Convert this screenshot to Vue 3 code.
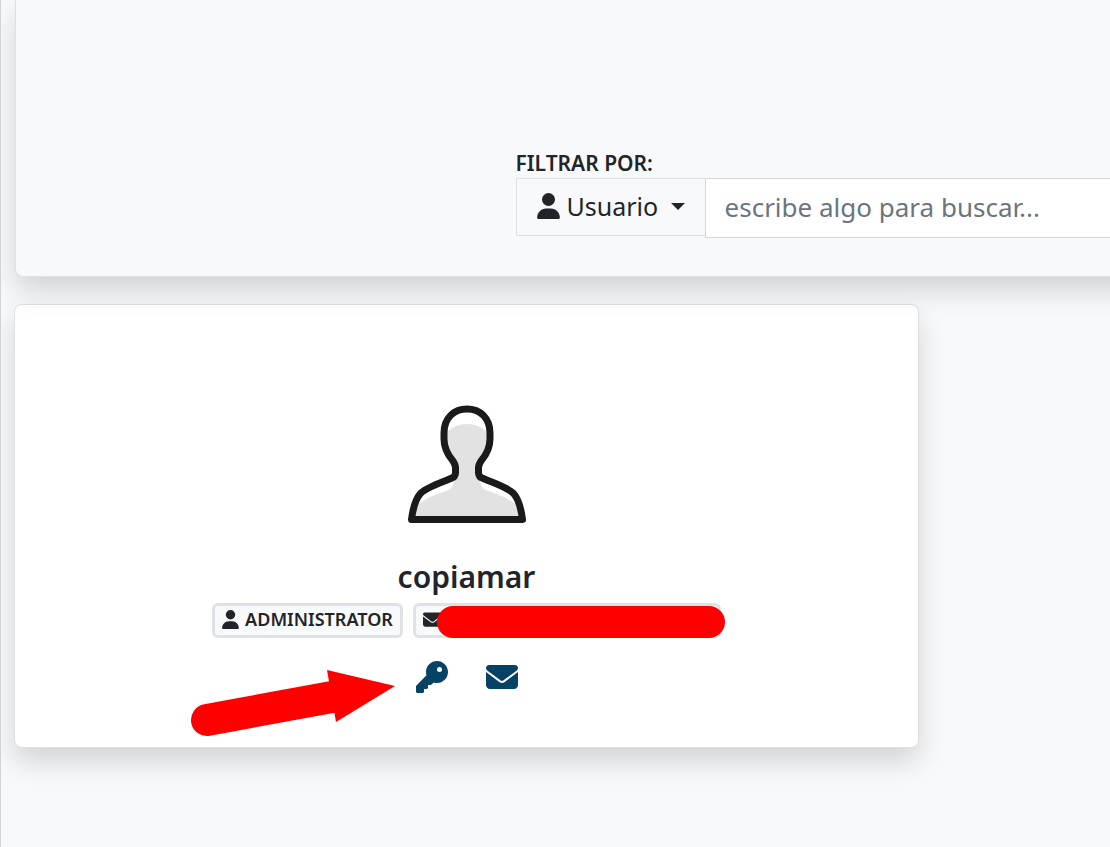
<script setup>
import { ref } from 'vue'

const query = ref('')
const personPath = 'M224 256a128 128 0 1 0 0-256 128 128 0 1 0 0 256zm-45.700 48C79.800 304 0 383.800 0 482.300 0 498.700 13.300 512 29.700 512h388.600c16.400 0 29.700-13.300 29.700-29.700C448 383.800 368.200 304 269.700 304z'
const mailPath = 'M48 64C21.500 64 0 85.500 0 112c0 15.100 7.100 29.300 19.200 38.400l217.600 163.200c11.400 8.500 27 8.500 38.400 0l217.600-163.200C504.900 141.300 512 127.100 512 112c0-26.500-21.500-48-48-48zM0 176v208c0 35.300 28.700 64 64 64h384c35.300 0 64-28.700 64-64V176L294.400 339.200c-22.800 17.100-54 17.100-76.800 0z'
const keyPath = 'M336 352c97.200 0 176-78.800 176-176S433.200 0 336 0 160 78.800 160 176c0 18.700 2.900 36.800 8.300 53.700L7 391c-4.500 4.500-7 10.600-7 17v80c0 13.300 10.700 24 24 24h80c13.300 0 24-10.700 24-24v-40h40c13.300 0 24-10.700 24-24v-40h40c6.400 0 12.500-2.500 17-7l33.300-33.300c16.900 5.400 35 8.300 53.700 8.300zM376 96a40 40 0 1 1 0 80 40 40 0 1 1 0-80z'
</script>

<template>
  <main class="page">
    <section class="panel">
      <div class="filter">
        <label class="filter-label" for="search">FILTRAR POR:</label>
        <div class="input-group">
          <button class="dropdown" type="button" aria-haspopup="true">
            <svg class="person" viewBox="0 0 448 512" aria-hidden="true"><path :d="personPath" /></svg>
            <span>Usuario</span>
            <span class="caret"></span>
          </button>
          <input id="search" v-model="query" class="search" type="text" placeholder="escribe algo para buscar..." />
        </div>
      </div>
    </section>

    <article class="card">
      <svg class="avatar" viewBox="0 0 120 120" role="img" aria-label="Avatar">
        <path class="fill" d="M5 115 7 106Q9 101 16 97C25 91 36 89 43 85Q47 83 48 70L43 54Q37 45 37 33C41 25 50 20 60 20S79 25 83 33Q83 45 77 54L72 70Q73 83 77 85C84 89 95 91 104 97Q111 101 113 106L115 115Z" />
        <path class="line" d="M4.500 115.500C6 104 8 96 13 90C19 83 36 78 45 74Q48 73 48.500 69V63Q48 60 46 57C40 50 37 43 37 35V29C37 14 47 5 60 5S83 14 83 29V35C83 43 80 50 74 57Q72 60 71.500 63V69Q72 73 75 74C84 78 101 83 107 90C112 96 114 104 115.500 115.500Z" />
      </svg>
      <h1 class="name">copiamar</h1>
      <div class="badges">
        <span class="badge">
          <svg class="small-person" viewBox="0 0 448 512" aria-hidden="true"><path :d="personPath" /></svg>
          ADMINISTRATOR
        </span>
        <span class="badge email">
          <svg class="small-mail" viewBox="0 0 512 512" aria-hidden="true"><path :d="mailPath" /></svg>
          <span class="redaction"></span>
        </span>
      </div>
      <div class="actions">
        <button type="button" aria-label="Cambiar clave">
          <svg viewBox="0 0 512 512" aria-hidden="true"><path :d="keyPath" /></svg>
        </button>
        <button type="button" aria-label="Enviar correo">
          <svg viewBox="0 0 512 512" aria-hidden="true"><path :d="mailPath" /></svg>
        </button>
        <svg class="arrow" viewBox="0 0 206 68" aria-hidden="true">
          <path class="shaft" d="M17 51 142 28" />
          <path d="M137 1 205 17 146 53Z" />
        </svg>
      </div>
    </article>
  </main>
</template>

<style>
body {
  margin: 0;
  background: #f8f9fb;
}
</style>

<style scoped>
* {
  box-sizing: border-box;
}
.page {
  min-height: 100vh;
  padding-left: 14px;
  border-left: 1px solid #d3d4d8;
  overflow: hidden;
  background: #f8f9fb;
  color: #212529;
  font-family: "Noto Sans", "Open Sans", sans-serif;
}
.panel {
  position: relative;
  z-index: 1;
  display: grid;
  grid-template-columns: 500fr 595fr;
  margin-right: -40px;
  padding: 148px 40px 38px 0;
  border: 1px solid #dfe0e2;
  border-width: 0 0 1px 1px;
  border-radius: 0 0 0 8px;
  background: #f8f9fb;
  box-shadow: 0 14px 28px rgba(0, 0, 0, 0.15);
}
.filter {
  grid-column: 2;
  min-width: 0;
}
.filter-label {
  display: block;
  font-size: 21px;
  font-weight: 600;
  line-height: 30px;
}
.input-group {
  display: flex;
  align-items: flex-start;
}
.dropdown {
  display: flex;
  flex: 0 0 190px;
  align-items: center;
  height: 58px;
  padding: 0 20px 2px;
  border: 1px solid #dee2e6;
  background: #f8f9fb;
  color: inherit;
  font: 25px/38px "Noto Sans", "Open Sans", sans-serif;
}
.person {
  width: 23px;
  height: 26px;
  margin-right: 7px;
}
.caret {
  margin-left: auto;
  border: 7px solid transparent;
  border-top-color: #212529;
  border-bottom: 0;
}
.search {
  flex: 1;
  min-width: 0;
  height: 60px;
  margin-left: -1px;
  padding: 0 19px 2px;
  border: 1px solid #d3d8dd;
  border-right: 0;
  border-radius: 0;
  background: #fff;
  color: #212529;
  font: 26px/38px "Noto Sans", "Open Sans", sans-serif;
}
.search::placeholder {
  color: #6c757d;
  opacity: 1;
}
.card {
  display: flex;
  flex-direction: column;
  align-items: center;
  width: calc(100% - 190px);
  margin-top: 27px;
  margin-left: -1px;
  padding: 99px 24px 54px;
  border: 1px solid #dfe0e2;
  border-radius: 8px;
  background: #fff;
  box-shadow: 0 14px 28px rgba(0, 0, 0, 0.15);
}
svg {
  display: block;
  flex: none;
  fill: currentColor;
}
.avatar {
  width: 120px;
  height: 120px;
}
.avatar .fill {
  fill: #e2e2e2;
}
.avatar .line {
  fill: none;
  stroke: #1a1a1a;
  stroke-width: 7;
  stroke-linejoin: round;
}
.name {
  margin: 33px 0 6px;
  font-size: 30px;
  font-weight: 600;
  line-height: 40px;
}
.badges {
  display: flex;
  gap: 10px;
}
.badge {
  position: relative;
  display: flex;
  align-items: center;
  gap: 6px;
  height: 35px;
  padding: 0 7px 3px;
  border: 3px solid #dee2e6;
  border-radius: 6px;
  background: #f8f9fb;
  font-size: 18px;
  font-weight: 600;
  line-height: 26px;
}
.email {
  width: 308px;
}
.small-person {
  width: 17px;
  height: 19px;
}
.small-mail {
  width: 19px;
  height: 19px;
}
.redaction {
  position: absolute;
  top: 0;
  right: -7px;
  width: 288px;
  height: 32px;
  border-radius: 16px;
  background: #f00;
}
.actions {
  position: relative;
  display: flex;
  gap: 38px;
  margin-top: 23px;
}
.actions button {
  padding: 0;
  border: 0;
  background: none;
  color: #054264;
}
.actions button svg {
  width: 32px;
  height: 32px;
}
.arrow {
  position: absolute;
  top: 8px;
  right: 122px;
  width: 206px;
  height: 68px;
  fill: #f00;
}
.arrow .shaft {
  stroke: #f00;
  stroke-width: 32;
  stroke-linecap: round;
}
</style>
